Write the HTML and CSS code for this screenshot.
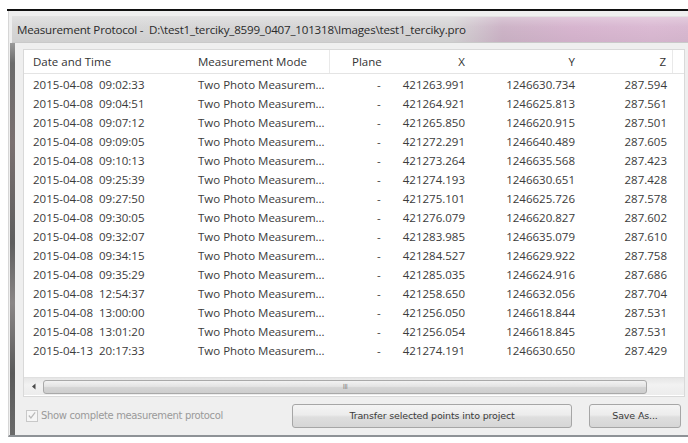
FILE: index.html
```html
<!DOCTYPE html>
<html lang="en">
<head>
<meta charset="utf-8">
<title>Measurement Protocol</title>
<link rel="stylesheet" href="styles.css">
</head>
<body>
<div class="screen">
  <div class="topline"></div>
  <div class="window">
    <div class="titlebar"><span class="title">Measurement Protocol -&nbsp; D:\test1_terciky_8599_0407_101318\Images\test1_terciky.pro</span></div>
    <div class="client">
      <div class="edge"></div>
      <div class="content">
        <div class="list">
          <div class="row head">
            <div class="c c1">Date and Time</div>
            <div class="c c2">Measurement Mode</div>
            <div class="c c3">Plane</div>
            <div class="c c4">X</div>
            <div class="c c5">Y</div>
            <div class="c c6">Z</div>
            <div class="c c7"></div>
          </div>
          <div class="rows">
            <div class="row"><div class="c c1">2015-04-08  09:02:33</div><div class="c c2">Two Photo Measurem...</div><div class="c c3">-</div><div class="c c4">421263.991</div><div class="c c5">1246630.734</div><div class="c c6">287.594</div></div>
            <div class="row"><div class="c c1">2015-04-08  09:04:51</div><div class="c c2">Two Photo Measurem...</div><div class="c c3">-</div><div class="c c4">421264.921</div><div class="c c5">1246625.813</div><div class="c c6">287.561</div></div>
            <div class="row"><div class="c c1">2015-04-08  09:07:12</div><div class="c c2">Two Photo Measurem...</div><div class="c c3">-</div><div class="c c4">421265.850</div><div class="c c5">1246620.915</div><div class="c c6">287.501</div></div>
            <div class="row"><div class="c c1">2015-04-08  09:09:05</div><div class="c c2">Two Photo Measurem...</div><div class="c c3">-</div><div class="c c4">421272.291</div><div class="c c5">1246640.489</div><div class="c c6">287.605</div></div>
            <div class="row"><div class="c c1">2015-04-08  09:10:13</div><div class="c c2">Two Photo Measurem...</div><div class="c c3">-</div><div class="c c4">421273.264</div><div class="c c5">1246635.568</div><div class="c c6">287.423</div></div>
            <div class="row"><div class="c c1">2015-04-08  09:25:39</div><div class="c c2">Two Photo Measurem...</div><div class="c c3">-</div><div class="c c4">421274.193</div><div class="c c5">1246630.651</div><div class="c c6">287.428</div></div>
            <div class="row"><div class="c c1">2015-04-08  09:27:50</div><div class="c c2">Two Photo Measurem...</div><div class="c c3">-</div><div class="c c4">421275.101</div><div class="c c5">1246625.726</div><div class="c c6">287.578</div></div>
            <div class="row"><div class="c c1">2015-04-08  09:30:05</div><div class="c c2">Two Photo Measurem...</div><div class="c c3">-</div><div class="c c4">421276.079</div><div class="c c5">1246620.827</div><div class="c c6">287.602</div></div>
            <div class="row"><div class="c c1">2015-04-08  09:32:07</div><div class="c c2">Two Photo Measurem...</div><div class="c c3">-</div><div class="c c4">421283.985</div><div class="c c5">1246635.079</div><div class="c c6">287.610</div></div>
            <div class="row"><div class="c c1">2015-04-08  09:34:15</div><div class="c c2">Two Photo Measurem...</div><div class="c c3">-</div><div class="c c4">421284.527</div><div class="c c5">1246629.922</div><div class="c c6">287.758</div></div>
            <div class="row"><div class="c c1">2015-04-08  09:35:29</div><div class="c c2">Two Photo Measurem...</div><div class="c c3">-</div><div class="c c4">421285.035</div><div class="c c5">1246624.916</div><div class="c c6">287.686</div></div>
            <div class="row"><div class="c c1">2015-04-08  12:54:37</div><div class="c c2">Two Photo Measurem...</div><div class="c c3">-</div><div class="c c4">421258.650</div><div class="c c5">1246632.056</div><div class="c c6">287.704</div></div>
            <div class="row"><div class="c c1">2015-04-08  13:00:00</div><div class="c c2">Two Photo Measurem...</div><div class="c c3">-</div><div class="c c4">421256.050</div><div class="c c5">1246618.844</div><div class="c c6">287.531</div></div>
            <div class="row"><div class="c c1">2015-04-08  13:01:20</div><div class="c c2">Two Photo Measurem...</div><div class="c c3">-</div><div class="c c4">421256.054</div><div class="c c5">1246618.845</div><div class="c c6">287.531</div></div>
            <div class="row"><div class="c c1">2015-04-13  20:17:33</div><div class="c c2">Two Photo Measurem...</div><div class="c c3">-</div><div class="c c4">421274.191</div><div class="c c5">1246630.650</div><div class="c c6">287.429</div></div>
          </div>
          <div class="hscroll">
            <div class="arrow"><svg width="6" height="7" viewBox="0 0 6 7"><path d="M4.5 0.5 L1 3.5 L4.5 6.5 Z" fill="#4a4a4a"/></svg></div>
            <div class="thumb"><span class="grip">III</span></div>
          </div>
        </div>
        <div class="footer">
          <label class="check">
            <span class="box"><svg width="11" height="11" viewBox="0 0 11 11"><path d="M2 5.5 L4.3 8.2 L9 2" fill="none" stroke="#b9b9b9" stroke-width="1.3"/></svg></span>
            <span class="check-text">Show complete measurement protocol</span>
          </label>
          <button class="btn transfer" type="button">Transfer selected points into project</button>
          <button class="btn save" type="button">Save As...</button>
        </div>
      </div>
    </div>
  </div>
</div>
</body>
</html>
```

FILE: styles.css
```css
html, body {
  margin: 0;
  padding: 0;
  background: #ffffff;
}

body {
  width: 688px;
  height: 443px;
  overflow: hidden;
  font-family: "Open Sans", "Noto Sans", sans-serif;
}

.screen {
  padding-top: 9px;
}

.topline {
  margin-left: 7px;
  height: 2px;
  background: #111111;
}

.window {
  margin-left: 8px;
  background: #efefef;
  border-left: 1px solid #d6d6d6;
  padding-top: 5px;
  height: 426px;
  box-sizing: border-box;
  border-bottom: 2px solid #8e9296;
}

/* caption strip with the pinkish glass toward the right */
.titlebar {
  height: 27px;
  margin-left: 3px;
  box-sizing: border-box;
  padding-left: 5px;
  display: flex;
  align-items: center;
  background:
    linear-gradient(to bottom, rgba(255,255,255,0.25), rgba(255,255,255,0) 40%, rgba(0,0,0,0.03)),
    linear-gradient(to right, #d7d7d7 0, #d5d4d5 440px, #cdb4c7 490px, #d7b5cf 560px, #dbbad3 640px, #d9b9d1 680px);
  border-top: 1px solid #e2e2e2;
  border-bottom: 1px solid #c9c9c9;
}

.title {
  font-size: 11.6px;
  color: #2a2a2a;
  white-space: pre;
  letter-spacing: -0.2px;
}

.client {
  display: flex;
  height: 392px;
}

.edge {
  width: 5px;
  margin-left: 1px;
  background: linear-gradient(to bottom, #9a9a9a 0, #6b6b6b 20px, #7a7070 100px, #5e5e5e 200px, #8a8686 260px, #5a5a5a 330px, #6a6a6a 100%);
}

.content {
  flex: 1;
  padding: 6px 3px 0 8px;
  display: flex;
  flex-direction: column;
}

.list {
  background: #ffffff;
  border: 1px solid #d9d9d9;
  height: 350px;
  box-sizing: border-box;
  display: flex;
  flex-direction: column;
  font-size: 11.5px;
  color: #3b3b3b;
}

.row {
  display: grid;
  grid-template-columns: 167px 139px 64px 77px 110px 92px 1fr;
  height: 19px;
  align-items: center;
  white-space: pre;
}

.row.head {
  height: 23px;
  border-bottom: 1px solid #e4e4e4;
  color: #333333;
}

.head .c {
  height: 100%;
  display: flex;
  align-items: center;
  box-sizing: border-box;
}

.head .c2, .head .c6 {
  border-right: 1px solid #e9e9e9;
}

.head .c4, .head .c5, .head .c6 {
  justify-content: flex-end;
}

.rows {
  padding-top: 1px;
}

.c1 { padding-left: 9px; }
.c2 { padding-left: 7px; }
.c3 { padding-left: 47px; }
.head .c3 { padding-left: 22px; }
.c4, .c5, .c6 { text-align: right; padding-right: 6px; }

.hscroll {
  margin-top: auto;
  margin-bottom: 1px;
  height: 17px;
  display: flex;
  align-items: center;
  background: linear-gradient(to bottom, #e6e6e6, #f2f2f2 40%, #ececec);
  border-top: 1px solid #e0e0e0;
}

.arrow {
  width: 19px;
  display: flex;
  justify-content: center;
  align-items: center;
}

.thumb {
  width: 604px;
  height: 14px;
  border: 1px solid #a9a9a9;
  border-radius: 3px;
  box-sizing: border-box;
  background: linear-gradient(to bottom, #f2f2f2 0, #e4e4e4 45%, #d4d4d4 55%, #cecece 100%);
  display: flex;
  justify-content: center;
  align-items: center;
}

.grip {
  font-family: "DejaVu Sans", sans-serif;
  font-size: 7px;
  color: #8a8a8a;
  letter-spacing: -0.5px;
}

.footer {
  display: flex;
  align-items: center;
  height: 38px;
  padding-bottom: 1px;
  box-sizing: border-box;
}

.check {
  display: flex;
  align-items: center;
  margin-left: 3px;
  width: 266px;
}

.box {
  width: 12px;
  height: 12px;
  border: 1px solid #c8c8c8;
  background: #f6f6f6;
  box-sizing: border-box;
  display: flex;
  align-items: center;
  justify-content: center;
  margin-right: 3px;
}

.check-text {
  font-family: "DejaVu Sans", sans-serif;
  font-size: 10px;
  color: #9a9a9a;
  letter-spacing: -0.35px;
}

.btn {
  height: 24px;
  border: 1px solid #a6a6a6;
  border-radius: 3px;
  background: linear-gradient(to bottom, #f4f4f4 0, #ececec 45%, #dedede 55%, #d6d6d6 100%);
  font-family: "DejaVu Sans", sans-serif;
  font-size: 9.5px;
  color: #3a3a3a;
  padding: 0;
  letter-spacing: -0.15px;
}

.transfer {
  width: 280px;
}

.save {
  width: 92px;
  margin-left: 17px;
}
```
